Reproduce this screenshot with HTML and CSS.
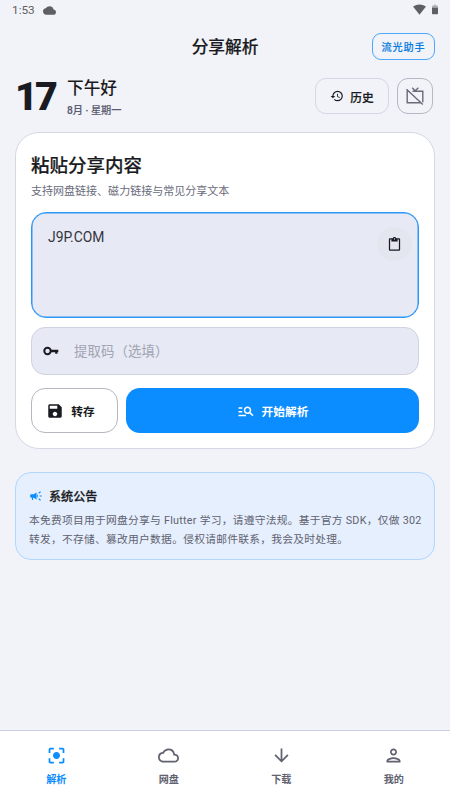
FILE: index.html
```html
<!DOCTYPE html>
<html lang="zh-CN">
<head>
<meta charset="utf-8">
<meta name="viewport" content="width=device-width, initial-scale=1">
<title>分享解析</title>
<link rel="stylesheet" href="styles.css">
</head>
<body>
<div class="app">
  <div class="status">
    <span class="clock">1:53</span>
    <svg class="status-cloud" viewBox="0 4 24 16"><path d="M19.35 10.04A7.49 7.49 0 0 0 12 4C9.11 4 6.6 5.64 5.35 8.04A5.994 5.994 0 0 0 0 14c0 3.31 2.69 6 6 6h13c2.76 0 5-2.24 5-5 0-2.64-2.05-4.78-4.65-4.96z"/></svg>
    <svg class="wifi" viewBox="0 0 13 11"><path d="M0 2.5Q6.5-1.7 13 2.5L6.5 10.7z"/></svg>
    <svg class="battery" viewBox="0 0 7 11"><path opacity=".45" d="M2 0h3v1h2v3H0V1h2z"/><path d="M0 3.5h7v6.7q0 .8-.8.8H.8Q0 11 0 10.2z"/></svg>
  </div>
  <header class="topbar">
    <h1>分享解析</h1>
    <button class="assistant">流光助手</button>
  </header>
  <section class="greeting">
    <div class="day">17</div>
    <div class="hello">
      <div class="hello-text">下午好</div>
      <div class="date">8月 · 星期一</div>
    </div>
    <button class="history">
      <svg viewBox="0 0 24 24"><path d="M13 3a9 9 0 0 0-9 9H1l3.89 3.89.07.14L9 12H6c0-3.87 3.13-7 7-7s7 3.13 7 7-3.13 7-7 7c-1.93 0-3.68-.79-4.94-2.06l-1.42 1.42A8.95 8.95 0 0 0 13 21a9 9 0 0 0 0-18zm-1 5v5l4.28 2.54.72-1.21-3.5-2.08V8z"/></svg>
      <span>历史</span>
    </button>
    <button class="tv">
      <svg viewBox="0 0 20 20" fill="none" stroke="currentColor" stroke-width="1.4"><path d="M3.6 5.2H2.2v11.5h13.3M7.5 5.2h10.3v11M1.5 3.2l16.3 15.4M7.2 1.8l3 3 3.2-3"/></svg>
    </button>
  </section>
  <main class="card">
    <h2>粘贴分享内容</h2>
    <p class="hint">支持网盘链接、磁力链接与常见分享文本</p>
    <div class="share-box">
      <span>J9P.COM</span>
      <button class="paste"><svg viewBox="0 0 24 24"><path d="M19 2h-4.18C14.4.84 13.3 0 12 0c-1.3 0-2.4.84-2.82 2H5c-1.1 0-2 .9-2 2v16c0 1.1.9 2 2 2h14c1.1 0 2-.9 2-2V4c0-1.1-.9-2-2-2zm-7 0c.55 0 1 .45 1 1s-.45 1-1 1-1-.45-1-1 .45-1 1-1zm7 18H5V4h2v3h10V4h2v16z"/></svg></button>
    </div>
    <div class="code-box">
      <svg viewBox="0 0 16 10"><path fill="none" stroke="currentColor" stroke-width="2" d="M7.7 5a3.2 3.2 0 1 1-6.4 0a3.2 3.2 0 0 1 6.4 0z"/><path d="M7.5 3.8h7.8v2.4h-.9v1.6h-2.2V6.2H7.5z"/></svg>
      <span>提取码（选填）</span>
    </div>
    <div class="actions">
      <button class="save">
        <svg viewBox="0 0 24 24"><path d="M17 3H5c-1.11 0-2 .9-2 2v14c0 1.1.89 2 2 2h14c1.1 0 2-.9 2-2V7l-4-4zm-5 16c-1.66 0-3-1.34-3-3s1.34-3 3-3 3 1.34 3 3-1.34 3-3 3zm3-10H5V5h10v4z"/></svg>
        <span>转存</span>
      </button>
      <button class="parse">
        <svg viewBox="0 0 24 24"><path d="M7 9H2V7h5v2zm0 3H2v2h5v-2zm13.59 7-3.83-3.83c-.8.52-1.74.83-2.76.83-2.76 0-5-2.24-5-5s2.24-5 5-5 5 2.24 5 5c0 1.02-.31 1.96-.83 2.75L22 17.59 20.59 19zM17 11c0-1.65-1.35-3-3-3s-3 1.35-3 3 1.35 3 3 3 3-1.35 3-3zM2 19h10v-2H2v2z"/></svg>
        <span>开始解析</span>
      </button>
    </div>
  </main>
  <section class="notice">
    <div class="notice-head">
      <svg viewBox="0 0 24 24"><path d="M18 11v2h4v-2h-4zm-2 6.61c.96.71 2.21 1.65 3.2 2.39.4-.53.8-1.07 1.2-1.6-.99-.74-2.24-1.68-3.2-2.4-.4.54-.8 1.08-1.2 1.61zM20.4 5.6c-.4-.53-.8-1.07-1.2-1.6-.99.74-2.24 1.68-3.2 2.4.4.53.8 1.07 1.2 1.6.96-.72 2.21-1.65 3.2-2.4zM4 9c-1.1 0-2 .9-2 2v2c0 1.1.9 2 2 2h1v4h2v-4h1l5 3V6L8 9H4zm11.5 3c0-1.33-.58-2.53-1.5-3.35v6.69c.92-.81 1.5-2.01 1.5-3.34z"/></svg>
      <h3>系统公告</h3>
    </div>
    <p>本免费项目用于网盘分享与 Flutter 学习，请遵守法规。基于官方 SDK，仅做 302<br>转发，不存储、篡改用户数据。侵权请邮件联系，我会及时处理。</p>
  </section>
  <nav class="tabs">
    <a class="tab active">
      <svg viewBox="0 0 24 24"><path d="M12 8c-2.21 0-4 1.79-4 4s1.79 4 4 4 4-1.79 4-4-1.79-4-4-4zm-7 7H3v4c0 1.1.9 2 2 2h4v-2H5v-4zM5 5h4V3H5c-1.1 0-2 .9-2 2v4h2V5zm14-2h-4v2h4v4h2V5c0-1.1-.9-2-2-2zm0 16h-4v2h4c1.1 0 2-.9 2-2v-4h-2v4z"/></svg>
      <span>解析</span>
    </a>
    <a class="tab">
      <svg viewBox="0 0 24 24"><path d="M19.35 10.04A7.49 7.49 0 0 0 12 4C9.11 4 6.6 5.64 5.35 8.04A5.994 5.994 0 0 0 0 14c0 3.31 2.69 6 6 6h13c2.76 0 5-2.24 5-5 0-2.64-2.05-4.78-4.65-4.96zM19 18H6c-2.21 0-4-1.79-4-4 0-2.05 1.53-3.76 3.56-3.97l1.07-.11.5-.95A5.469 5.469 0 0 1 12 6c2.62 0 4.88 1.86 5.39 4.43l.3 1.5 1.53.11A2.98 2.98 0 0 1 22 15c0 1.65-1.35 3-3 3z"/></svg>
      <span>网盘</span>
    </a>
    <a class="tab">
      <svg viewBox="0 0 24 24"><path d="M20 12l-1.41-1.41L13 16.17V4h-2v12.17l-5.58-5.59L4 12l8 8 8-8z"/></svg>
      <span>下载</span>
    </a>
    <a class="tab">
      <svg viewBox="0 0 24 24"><path d="M12 6c1.1 0 2 .9 2 2s-.9 2-2 2-2-.9-2-2 .9-2 2-2m0 10c2.7 0 5.8 1.29 6 2H6c.23-.72 3.31-2 6-2m0-12C9.79 4 8 5.79 8 8s1.79 4 4 4 4-1.79 4-4-1.79-4-4-4zm0 10c-2.67 0-8 1.34-8 4v2h16v-2c0-2.66-5.33-4-8-4z"/></svg>
      <span>我的</span>
    </a>
  </nav>
</div>
</body>
</html>
```
FILE: styles.css
```css
* { box-sizing: border-box; }
body {
  margin: 0;
  background: #f2f3f8;
  color: #1a1b22;
  font-family: Roboto, "Noto Sans CJK SC", sans-serif;
}
h1, h2, h3, p { margin: 0; }
button {
  display: flex;
  align-items: center;
  justify-content: center;
  padding: 0;
  border: 0;
  background: none;
  color: inherit;
  font: inherit;
}
svg { display: block; flex: none; fill: currentColor; }
svg[fill="none"] { fill: none; }
.app { height: 800px; display: flex; flex-direction: column; overflow: hidden; }

.status {
  height: 20px;
  display: flex;
  align-items: center;
  padding: 0 12px;
  color: #5e5f63;
}
.clock { font-size: 11.8px; line-height: 20px; }
.status-cloud { width: 13px; height: 9px; margin-left: 8px; }
.wifi { width: 13px; height: 11px; margin-left: auto; margin-bottom: 2px; }
.battery { width: 6px; height: 11px; margin: 0 0 2px 6px; }

.topbar {
  height: 54px;
  display: grid;
  grid-template-columns: 1fr auto 1fr;
  align-items: center;
  padding: 0 15px;
}
.topbar h1 { grid-column: 2; padding-top: 2px; font-size: 16.7px; line-height: 24px; font-weight: 500; -webkit-text-stroke: .2px; }
.assistant {
  justify-self: end;
  width: 63px;
  height: 27px;
  margin-bottom: 2px;
  border: 1px solid #4da7fb;
  border-radius: 9px;
  color: #0a7ee0;
  font-size: 10.2px;
  font-weight: 500;
  letter-spacing: .8px;
  -webkit-text-stroke: .15px;
}

.greeting {
  height: 58px;
  display: flex;
  align-items: flex-start;
  padding: 4px 17px 0 15px;
}
.day { width: 52px; padding-top: 1px; font-size: 39.5px; line-height: 36px; font-weight: 900; letter-spacing: -2.8px; }
.hello-text { font-size: 16.7px; line-height: 21px; font-weight: 500; }
.date { margin-top: 4px; color: #5b5d72; font-size: 10.2px; line-height: 15px; font-weight: 500; -webkit-text-stroke: .15px; }
.history {
  width: 74px;
  height: 36px;
  margin-left: auto;
  border: 1px solid #d5d7e5;
  border-radius: 11px;
  gap: 6px;
  font-size: 11.7px;
  font-weight: 500;
  -webkit-text-stroke: .2px;
}
.history span { padding-top: 1px; }
.history svg { width: 14px; height: 14px; }
.tv { width: 36px; height: 36px; margin-left: 8px; border: 1px solid #b5b7c4; border-radius: 11px; color: #6a6b7a; }
.tv svg { width: 20px; height: 20px; }

.card {
  height: 317px;
  margin: 0 15px;
  padding: 18px 15px 0;
  border: 1px solid #d5d7e5;
  border-radius: 24px;
  background: #fff;
}
.card h2 { padding-top: 1px; font-size: 18.5px; line-height: 28px; font-weight: 500; -webkit-text-stroke: .2px; }
.hint { margin-top: 4px; font-size: 11.03px; line-height: 16px; color: #696b7b; }
.share-box {
  height: 106px;
  margin-top: 12px;
  padding: 14px 6px 0 16px;
  display: flex;
  justify-content: space-between;
  align-items: flex-start;
  border: 1px solid #2c97fa;
  box-shadow: inset 0 0 0 .5px #2c97fa;
  border-radius: 15px;
  background: #e7eaf4;
  font-size: 13.9px;
  line-height: 20px;
  letter-spacing: 0;
  color: #34353d;
}
.paste { width: 35px; height: 34px; border-radius: 50%; background: #e3e6ee; color: #1a1b22; }
.paste svg { width: 15px; height: 15px; }
.code-box {
  height: 48px;
  margin-top: 9px;
  padding: 0 11px;
  display: flex;
  align-items: center;
  gap: 15px;
  border: 1px solid #cfd3e1;
  border-radius: 14px;
  background: #e7eaf4;
}
.code-box svg { width: 16px; height: 10px; }
.code-box span { padding-top: 2px; color: #a0a3b2; font-size: 13.4px; line-height: 20px; letter-spacing: .1px; }
.actions { display: flex; gap: 8px; margin-top: 13px; }
.actions button { height: 45px; border-radius: 14px; font-size: 11.7px; font-weight: 700; }
.save { width: 87px; border: 1px solid #b5b7c1; gap: 7px; }
.actions .save { padding-right: 8px; }
.save svg { width: 18px; height: 18px; }
.parse { flex: 1; background: #0b8cff; color: #fff; gap: 7px; }
.parse svg { width: 18px; height: 18px; }

.notice {
  height: 88px;
  margin: 23px 15px 0;
  padding: 14px 12px 0 13px;
  border: 1px solid #b0d7fc;
  border-radius: 16px;
  background: #e6effd;
}
.notice-head { display: flex; align-items: center; gap: 6px; height: 18px; }
.notice-head svg { width: 14px; height: 14px; color: #0b8cff; }
.notice h3 { padding-top: 1px; font-size: 12.1px; line-height: 18px; font-weight: 500; -webkit-text-stroke: .25px; }
.notice p { margin-top: 7px; color: #5f6270; font-size: 10.75px; letter-spacing: .26px; line-height: 18.5px; white-space: nowrap; }

.tabs {
  height: 70px;
  margin-top: auto;
  display: grid;
  grid-template-columns: repeat(4, 1fr);
  border-top: 1px solid #cdcfe3;
  background: #fff;
}
.tab { display: flex; flex-direction: column; align-items: center; padding-top: 14px; gap: 6px; color: #60626f; }
.tab svg { width: 21px; height: 21px; }
.tab span { font-size: 10.1px; line-height: 15px; font-weight: 700; }
.active { color: #0b8cff; }
```
